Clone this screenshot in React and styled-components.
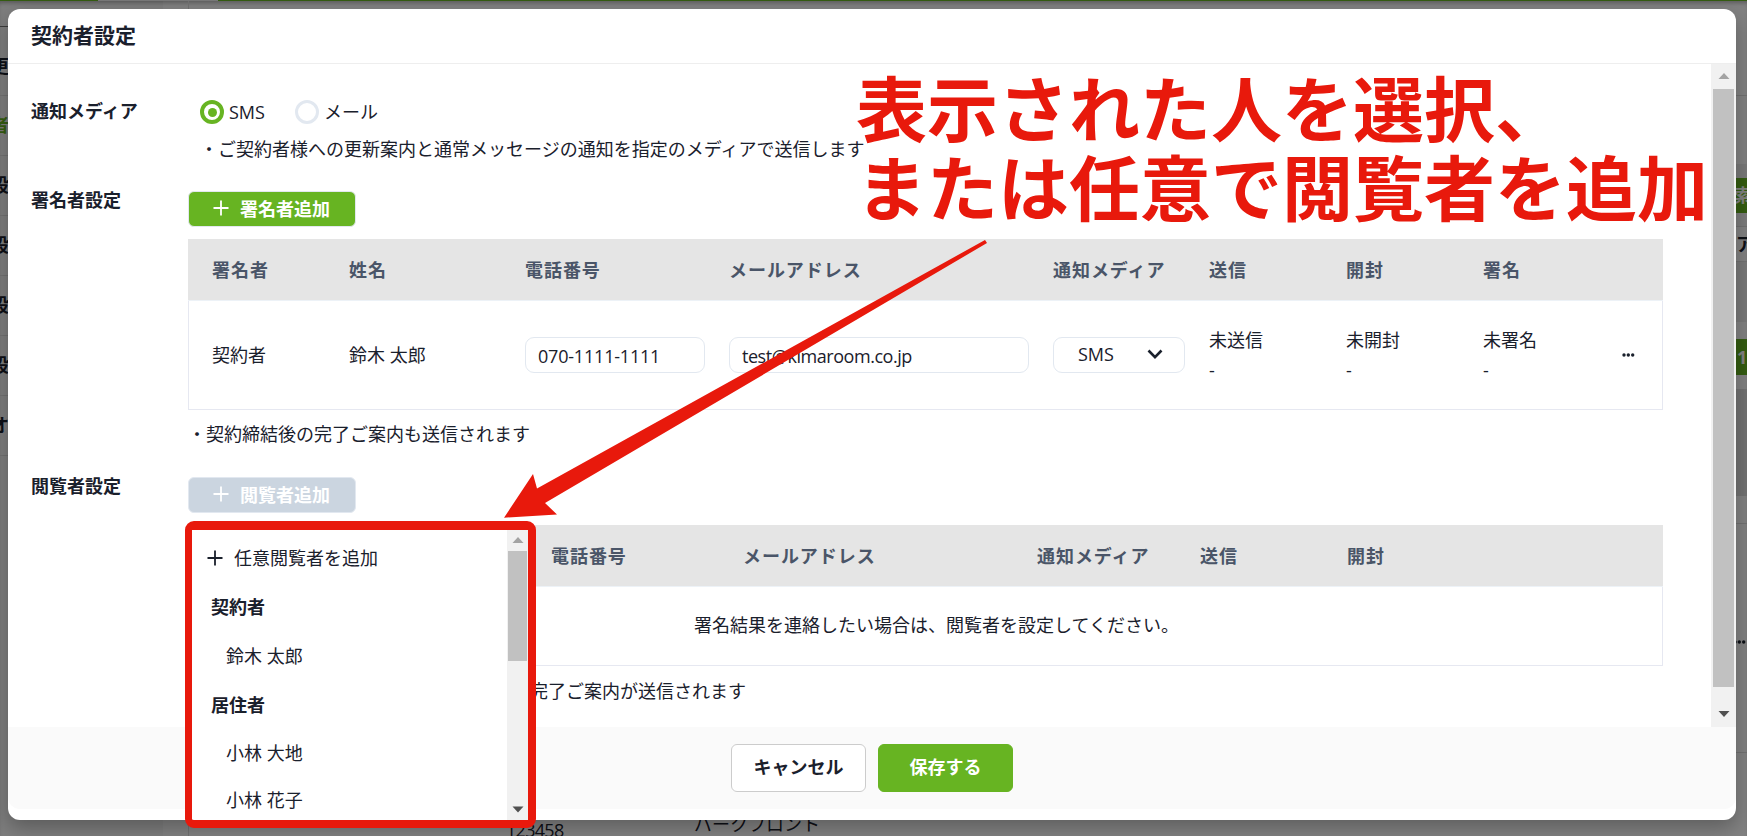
import React, { useState } from 'react';
import styled, { createGlobalStyle, css } from 'styled-components';

const GREEN = '#67b422';
const RED = '#e8190c';

const GlobalStyle = createGlobalStyle`
  * {
    box-sizing: border-box;
  }

  body {
    margin: 0;
    overflow: hidden;
    background: #ffffff;
    color: #1a202c;
    font-family: 'Open Sans', 'Noto Sans CJK JP', sans-serif;
    font-size: 18px;
    line-height: 24px;
  }

  button {
    font-family: inherit;
  }
`;

/* ---------- page behind the dialog ---------- */

const Page = styled.div`
  position: relative;
  width: 1747px;
  height: 836px;
  overflow: hidden;
  display: flex;
  flex-direction: column;
  background: #fff;
`;

const TopBar = styled.div`
  height: 1px;
  flex: none;
  padding-left: 98px;
  background: #67b422;

  span {
    display: block;
    width: 120px;
    height: 1px;
    background: #eee;
  }
`;

const PageBody = styled.div`
  flex: 1;
  display: flex;
  justify-content: space-between;
  box-shadow: inset 0 4px 4px -2px rgba(0, 0, 0, 0.3);
`;

const SideMenu = styled.div`
  width: 163px;
  background: rgba(0, 0, 0, 0.03);
`;

const SideHead = styled.div`
  height: 26px;
  border-bottom: 1px solid #777;
`;

const SideItem = styled.div`
  height: ${(p) => p.$h || 60}px;
  padding-top: ${(p) => (p.$h ? 10 : 0)}px;
  border-bottom: 1px solid #ddd;
  color: ${(p) => (p.$active ? GREEN : 'inherit')};
  font-weight: 700;
  line-height: 58px;
  text-indent: -9px;
  white-space: nowrap;
  overflow: hidden;
`;

const PageBottom = styled.div`
  flex: 1;
  display: flex;
  align-items: flex-end;
  margin-left: 25px;
  padding-left: 317px;
  border-left: 1px solid #ddd;

  span {
    width: 188px;
    height: 18px;
    letter-spacing: -0.7px;
  }

  span + span {
    height: 24px;
    letter-spacing: 0;
  }
`;

const PageEdge = styled.div`
  width: 11px;
  overflow: hidden;
  font-weight: 700;
`;

const EdgeBlock = styled.div`
  height: ${(p) => p.$h}px;
  line-height: ${(p) => p.$h}px;
  background: ${(p) => p.$bg || 'transparent'};
  color: ${(p) => p.$color || '#1a202c'};
  border-bottom: ${(p) => (p.$line ? '1px solid #ddd' : 'none')};
  text-indent: ${(p) => p.$indent || 0}px;
  white-space: nowrap;
`;

const Overlay = styled.div`
  position: absolute;
  inset: 0;
  background: rgba(0, 0, 0, 0.49);
`;

/* ---------- dialog ---------- */

const Modal = styled.div`
  position: absolute;
  top: 9px;
  left: 8px;
  width: 1728px;
  height: 811px;
  display: flex;
  flex-direction: column;
  background: #fff;
  border-radius: 12px;
  box-shadow: 0 8px 20px rgba(0, 0, 0, 0.28);
`;

const ModalHeader = styled.div`
  height: 55px;
  padding: 0 23px;
  border-bottom: 1px solid #eeeeee;
  font-size: 21px;
  font-weight: 700;
  line-height: 52px;
`;

const ModalBody = styled.div`
  height: 663px;
  display: flex;
`;

const Content = styled.div`
  flex: 1;
  padding: 38px 0 0 23px;
`;

const Section = styled.section`
  display: grid;
  grid-template-columns: 157px 1475px;
  height: ${(p) => p.$h}px;
`;

const Label = styled.div`
  font-weight: 700;
  line-height: 18px;
`;

const RadioRow = styled.div`
  display: flex;
  align-items: center;
  height: 20px;
  padding-left: 12px;
`;

const Radio = styled.label`
  display: flex;
  align-items: center;
  gap: 5px;
  width: 95px;
  line-height: 22px;
`;

const RadioMark = styled.span`
  display: flex;
  align-items: center;
  justify-content: center;
  width: 24px;
  height: 24px;
  border: ${(p) => (p.$on ? `4px solid ${GREEN}` : '3px solid #e2e8f0')};
  border-radius: 50%;

  &::after {
    content: '';
    width: 9px;
    height: 9px;
    border-radius: 50%;
    background: ${(p) => (p.$on ? GREEN : 'transparent')};
  }
`;

const Note = styled.div`
  margin-top: ${(p) => p.$top}px;
  padding-left: ${(p) => p.$left || 0}px;
  white-space: nowrap;
`;

const AddButton = styled.button`
  display: flex;
  align-items: center;
  gap: 11px;
  width: 168px;
  height: 36px;
  padding: 0 0 2px 24px;
  border: 1px solid #e2e8f0;
  border-radius: 6px;
  background: ${(p) => (p.disabled ? '#cbd5e0' : GREEN)};
  color: #fff;
  font-size: 18px;
  font-weight: 700;
`;

const Table = styled.div`
  margin-top: 12px;
  border: 1px solid #e6e8f1;
`;

const row = css`
  display: grid;
  grid-template-columns: ${(p) => p.$cols};
  align-items: center;
`;

const HeadRow = styled.div`
  ${row}
  height: 62px;
  margin: -1px -1px 0;
  padding-left: 24px;
  border-bottom: 1px solid #edf2f7;
  background: #e5e5e5;
  color: #4a5568;
  font-weight: 700;
  letter-spacing: 0.95px;
`;

const BodyRow = styled.div`
  ${row}
  height: 108px;
  padding-left: 23px;
`;

const EmptyRow = styled.div`
  height: 78px;
  padding-left: 22px;
  text-align: center;
  line-height: 77px;
`;

const Input = styled.input`
  width: ${(p) => p.$w}px;
  height: 36px;
  padding: 2px 12px 0;
  border: 1px solid #e2e8f0;
  border-radius: 9px;
  outline: none;
  color: #1a202c;
  font: inherit;
  letter-spacing: ${(p) => p.$spacing || 0}px;
`;

const Select = styled.div`
  display: flex;
  align-items: center;
  justify-content: space-between;
  width: 132px;
  height: 36px;
  padding: 0 21px 2px 24px;
  border: 1px solid #e2e8f0;
  border-radius: 9px;
`;

const Status = styled.div`
  display: flex;
  flex-direction: column;
  gap: 6px;
`;

const ModalFooter = styled.div`
  display: flex;
  align-items: center;
  justify-content: center;
  gap: 12px;
  height: 82px;
  background: #fafafa;
  border-radius: 0 0 12px 12px;
`;

const FooterButton = styled.button`
  width: 135px;
  height: 48px;
  padding: 0 0 4px;
  border: 1px solid ${(p) => (p.$primary ? GREEN : '#cccccc')};
  border-radius: 6px;
  background: ${(p) => (p.$primary ? GREEN : '#fff')};
  color: ${(p) => (p.$primary ? '#fff' : '#1a202c')};
  font-size: 18px;
  font-weight: 700;
`;

/* ---------- scrollbar ---------- */

const Track = styled.div`
  flex: none;
  width: ${(p) => p.$w}px;
  display: flex;
  flex-direction: column;
  align-items: center;
  background: #f1f1f1;

  svg {
    flex: none;
    display: block;
  }
`;

const Thumb = styled.div`
  width: ${(p) => p.$w}px;
  height: ${(p) => p.$h}px;
  margin-bottom: auto;
  background: #c1c1c1;
`;

/* ---------- viewer menu ---------- */

const Menu = styled.div`
  position: absolute;
  top: 521px;
  left: 185px;
  width: 351px;
  height: 307px;
  display: flex;
  border: solid ${RED};
  border-width: 9px 8px 8px 7px;
  border-radius: 9px;
  background: #fff;
`;

const MenuList = styled.div`
  flex: 1;
  overflow: hidden;
  padding-top: 4px;
`;

const MenuItem = styled.div`
  display: flex;
  align-items: center;
  gap: 11px;
  height: ${(p) => p.$h || 48.75}px;
  padding-left: ${(p) => p.$left}px;
  font-weight: ${(p) => (p.$bold ? 700 : 400)};
`;

/* ---------- annotation ---------- */

const Callout = styled.div`
  position: absolute;
  top: 66px;
  left: 856px;
  color: ${RED};
  font-family: 'Noto Sans CJK JP', sans-serif;
  font-size: 71px;
  font-weight: 700;
  line-height: 79px;
  white-space: nowrap;
`;

const Arrow = styled.svg`
  position: absolute;
  top: 0;
  left: 0;
  pointer-events: none;
`;

const signerCols = '137px 176px 204px 324px 156px 137px 137px 139px 1fr';
const viewerCols = '339px 192px 294px 163px 147px 1fr';

const Plus = () => (
  <svg width="16" height="16" viewBox="0 0 16 16" stroke="currentColor" strokeWidth="1.8">
    <path d="M8 0.5V15.5M0.5 8H15.5" />
  </svg>
);

const Chevron = () => (
  <svg width="16" height="11" viewBox="0 0 16 11" fill="none" stroke="#1a202c" strokeWidth="2.6">
    <path d="M1.5 1.5L8 8.2L14.5 1.5" />
  </svg>
);

const Dots = () => (
  <svg width="14" height="6" viewBox="0 0 14 6" fill="#1a202c">
    <circle cx="2" cy="3" r="1.7" />
    <circle cx="6.3" cy="3" r="1.7" />
    <circle cx="10.7" cy="3" r="1.7" />
  </svg>
);

const Scrollbar = ({ width, thumbWidth, thumbHeight, top, bottom }) => (
  <Track $w={width}>
    <svg width="12" height={top} viewBox={`0 0 12 ${top}`}>
      <path d={`M0.5 ${top / 2 + 2.5}H11.5L6 ${top / 2 - 3.5}Z`} fill="#a3a3a3" />
    </svg>
    <Thumb $w={thumbWidth} $h={thumbHeight} />
    <svg width="12" height={bottom} viewBox={`0 0 12 ${bottom}`}>
      <path d={`M0.5 ${bottom / 2 - 3}H11.5L6 ${bottom / 2 + 3}Z`} fill="#505050" />
    </svg>
  </Track>
);

const Background = () => (
  <>
    <TopBar>
      <span />
    </TopBar>
    <PageBody>
      <SideMenu>
        <SideHead />
        <SideItem $h={69}>更新</SideItem>
        <SideItem $active>者設定</SideItem>
        <SideItem>設定</SideItem>
        <SideItem>設定</SideItem>
        <SideItem>設定</SideItem>
        <SideItem>設定</SideItem>
        <SideItem>オプション</SideItem>
      </SideMenu>
      <PageBottom>
        <span>123458</span>
        <span>パークフロント</span>
      </PageBottom>
      <PageEdge>
        <EdgeBlock $h={95} $line />
        <EdgeBlock $h={68} />
        <EdgeBlock $h={14} $bg="#eeeeee" />
        <EdgeBlock $h={35} $bg={GREEN} $color="#fff" $indent={-2}>
          索
        </EdgeBlock>
        <EdgeBlock $h={14} $bg="#f3f3f3" $line />
        <EdgeBlock $h={35} $line>
          ア
        </EdgeBlock>
        <EdgeBlock $h={60} $bg="#eeeeee" />
        <EdgeBlock $h={17} />
        <EdgeBlock $h={36} $bg={GREEN} $color="#fff" $indent={1}>
          1
        </EdgeBlock>
        <EdgeBlock $h={14} />
        <EdgeBlock $h={107} $bg="#e0e0e0" />
        <EdgeBlock $h={28} $line />
        <EdgeBlock $h={229} $line $indent={-3}>
          <Dots />
        </EdgeBlock>
      </PageEdge>
    </PageBody>
    <Overlay />
  </>
);

const SignerSection = () => {
  const [phone, setPhone] = useState('070-1111-1111');
  const [email, setEmail] = useState('test@kimaroom.co.jp');

  return (
    <Section $h={286}>
      <Label>署名者設定</Label>
      <div>
        <AddButton>
          <Plus />
          署名者追加
        </AddButton>
        <Table>
          <HeadRow $cols={signerCols}>
            <span>署名者</span>
            <span>姓名</span>
            <span>電話番号</span>
            <span>メールアドレス</span>
            <span>通知メディア</span>
            <span>送信</span>
            <span>開封</span>
            <span>署名</span>
          </HeadRow>
          <BodyRow $cols={signerCols}>
            <span>契約者</span>
            <span>鈴木 太郎</span>
            <Input $w={180} $spacing={-0.2} value={phone} onChange={(e) => setPhone(e.target.value)} />
            <Input $w={300} $spacing={-0.45} value={email} onChange={(e) => setEmail(e.target.value)} />
            <Select>
              SMS
              <Chevron />
            </Select>
            <Status>
              <span>未送信</span>
              <span>-</span>
            </Status>
            <Status>
              <span>未開封</span>
              <span>-</span>
            </Status>
            <Status>
              <span>未署名</span>
              <span>-</span>
            </Status>
            <Dots />
          </BodyRow>
        </Table>
        <Note $top={12}>・契約締結後の完了ご案内も送信されます</Note>
      </div>
    </Section>
  );
};

const ViewerSection = () => (
  <Section $h={240}>
    <Label>閲覧者設定</Label>
    <div>
      <AddButton disabled>
        <Plus />
        閲覧者追加
      </AddButton>
      <Table>
        <HeadRow $cols={viewerCols}>
          <span />
          <span>電話番号</span>
          <span>メールアドレス</span>
          <span>通知メディア</span>
          <span>送信</span>
          <span>開封</span>
        </HeadRow>
        <EmptyRow>署名結果を連絡したい場合は、閲覧者を設定してください。</EmptyRow>
      </Table>
      <Note $top={13} $left={342}>
        完了ご案内が送信されます
      </Note>
    </div>
  </Section>
);

const ViewerMenu = () => (
  <Menu>
    <MenuList>
      <MenuItem $left={15}>
        <Plus />
        任意閲覧者を追加
      </MenuItem>
      <MenuItem $left={19} $bold>
        契約者
      </MenuItem>
      <MenuItem $left={34}>鈴木 太郎</MenuItem>
      <MenuItem $left={19} $bold>
        居住者
      </MenuItem>
      <MenuItem $left={34}>小林 大地</MenuItem>
      <MenuItem $left={34} $h={44}>
        小林 花子
      </MenuItem>
    </MenuList>
    <Scrollbar width={21} thumbWidth={19} thumbHeight={110} top={21} bottom={21} />
  </Menu>
);

const App = () => {
  const [media, setMedia] = useState('SMS');

  return (
    <Page>
      <GlobalStyle />
      <Background />
      <Modal>
        <ModalHeader>契約者設定</ModalHeader>
        <ModalBody>
          <Content>
            <Section $h={89}>
              <Label>通知メディア</Label>
              <div>
                <RadioRow>
                  {['SMS', 'メール'].map((name) => (
                    <Radio key={name} onClick={() => setMedia(name)}>
                      <RadioMark $on={media === name} />
                      {name}
                    </Radio>
                  ))}
                </RadioRow>
                <Note $top={15} $left={12}>
                  ・ご契約者様への更新案内と通常メッセージの通知を指定のメディアで送信します
                </Note>
              </div>
            </Section>
            <SignerSection />
            <ViewerSection />
          </Content>
          <Scrollbar width={25} thumbWidth={21} thumbHeight={598} top={25} bottom={26} />
        </ModalBody>
        <ModalFooter>
          <FooterButton>キャンセル</FooterButton>
          <FooterButton $primary>保存する</FooterButton>
        </ModalFooter>
      </Modal>
      <ViewerMenu />
      <Callout>
        表示された人を選択、
        <br />
        または任意で閲覧者を追加
      </Callout>
      <Arrow width="1747" height="836" viewBox="0 0 1747 836">
        <path d="M504 517.7L533 474L537 488.5L985 240L987 243L545 503L557 514.5Z" fill={RED} />
      </Arrow>
    </Page>
  );
};

export default App;
